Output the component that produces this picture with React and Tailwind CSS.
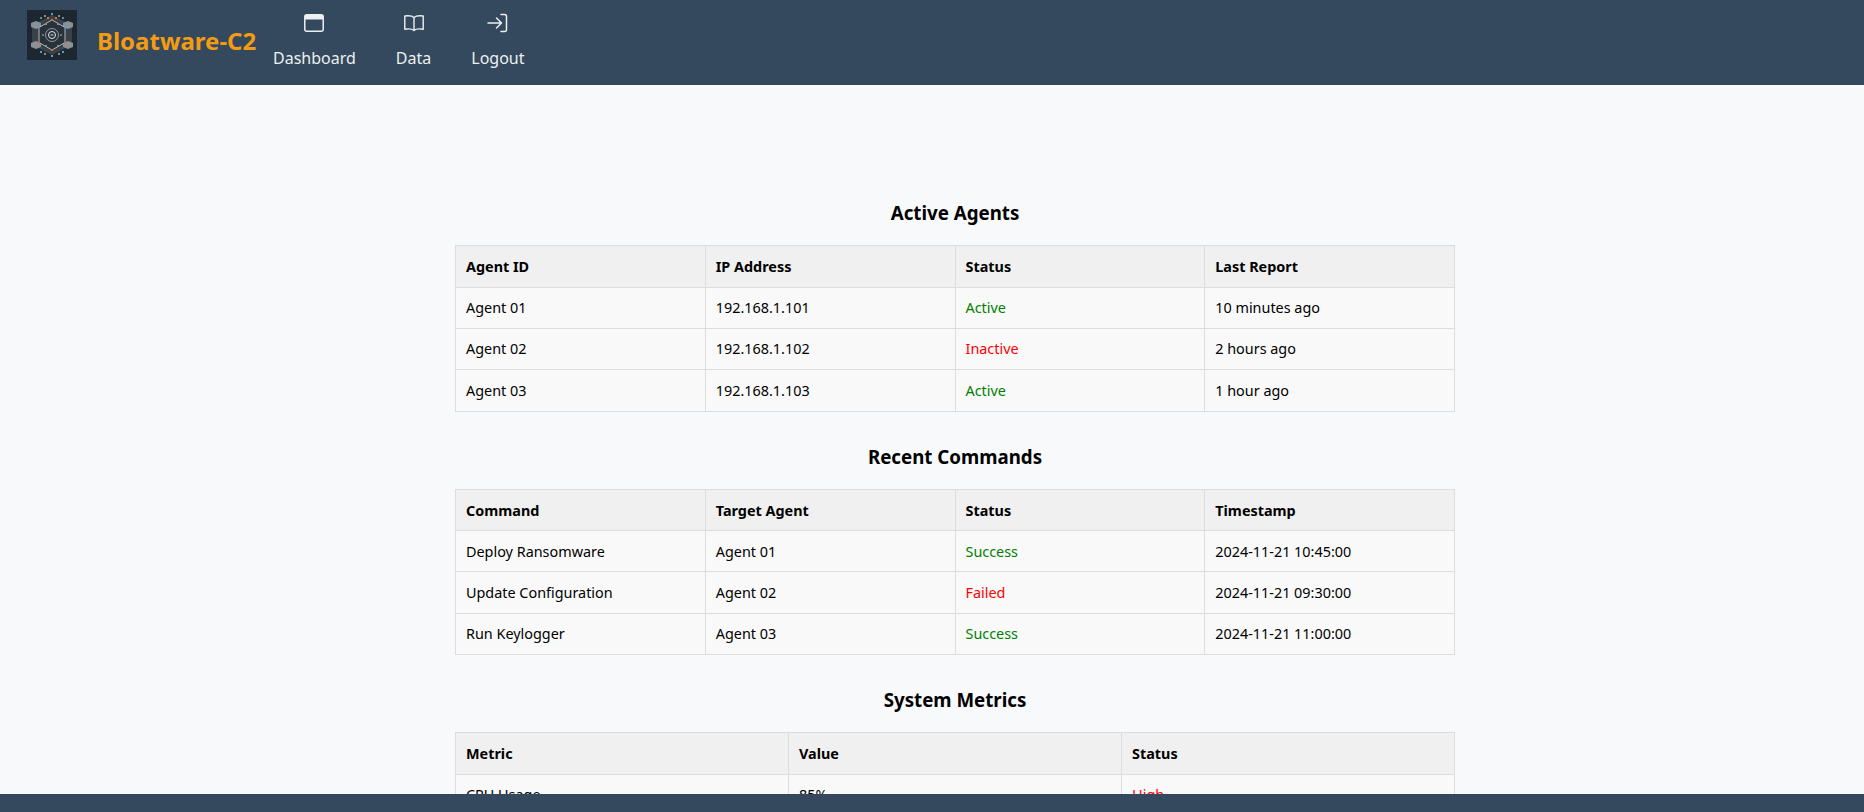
import React from "react";

const font = "font-['Noto_Sans',sans-serif]";

function Logo() {
  const hex = "25,10 38,17.5 38,32.5 25,40 12,32.5 12,17.5";
  const dots = [
    [25,4,"#4ea3c7"],[18,6,"#8a8f94"],[32,6,"#8a8f94"],[14,8,"#6b8796"],[36,8,"#6b8796"],
    [21,8,"#d0703a"],[29,8,"#d0703a"],[25,10,"#d0703a"],[12,17,"#4ea3c7"],[38,17,"#4ea3c7"],[12,33,"#d0703a"],[38,33,"#d0703a"],
    [25,40,"#d0703a"],[25,46,"#4ea3c7"],[18,44,"#8a8f94"],[32,44,"#8a8f94"],[14,42,"#4ea3c7"],[36,42,"#4ea3c7"],
    [19,14,"#8a8f94"],[31,14,"#8a8f94"],[19,36,"#8a8f94"],[31,36,"#8a8f94"],[16,25,"#6b7278"],[34,25,"#6b7278"],
  ];
  return (
    <svg width="50" height="50" viewBox="0 0 50 50" className="shrink-0">
      <rect width="50" height="50" fill="#1c2732" />
      <polygon points="25,5 45,15 45,35 25,45 5,35 5,15" fill="#3a4148" />
      {[[9,15],[41,15],[9,35],[41,35]].map(([x,y],i)=>(
        <polygon key={i} points={`${x},${y-4} ${x+5},${y-2} ${x+5},${y+2} ${x},${y+4} ${x-5},${y+2} ${x-5},${y-2}`} fill="#8b9297" />
      ))}
      <polygon points={hex} fill="#29323a" stroke="#c9d6dc" strokeWidth="0.8" />
      <circle cx="25" cy="25" r="6.5" fill="none" stroke="#8f9aa0" strokeWidth="1" />
      <circle cx="25" cy="25" r="3.5" fill="none" stroke="#e3e8ea" strokeWidth="1" />
      <rect x="23.5" y="24.5" width="3" height="1" fill="#e3e8ea" />
      {dots.map(([x,y,c],i)=>(<rect key={i} x={x-1} y={y-1} width="2" height="2" fill={c} />))}
    </svg>
  );
}

const WindowIcon = () => (
  <svg width="20" height="20" viewBox="0 0 20 20" fill="none">
    <rect x="0.8" y="1.8" width="18.4" height="16.4" rx="2" stroke="#ecf0f1" strokeWidth="1.5" />
    <path d="M0.8 6.5V3.8a2 2 0 0 1 2-2h14.4a2 2 0 0 1 2 2v2.7z" fill="#ecf0f1" />
  </svg>
);
const BookIcon = () => (
  <svg width="20" height="20" viewBox="0 0 20 20" fill="none" stroke="#ecf0f1" strokeWidth="1.4" strokeLinejoin="round">
    <path d="M10 4.5C8.5 3 4.5 2.6 0.8 3v13.2C4.5 15.7 8.5 16 10 17.4c1.5-1.4 5.5-1.7 9.2-1.2V3C15.5 2.6 11.5 3 10 4.5z" />
    <path d="M10 4.5v12.9" />
  </svg>
);
const LogoutIcon = () => (
  <svg width="21" height="20" viewBox="0 0 21 20" fill="none" stroke="#ecf0f1" strokeWidth="1.5" strokeLinecap="round" strokeLinejoin="round">
    <path d="M1 10h13M9.5 5l5 5-5 5" />
    <path d="M14 1.5h3.5A2 2 0 0 1 19.5 3.5v13a2 2 0 0 1-2 2H14" />
  </svg>
);

function NavItem({ icon: Icon, label }) {
  return (
    <a className="flex flex-col items-center text-[#ecf0f1] text-base leading-6">
      <span className="h-[30px] mb-[8px] flex items-center justify-center"><Icon /></span>
      <span>{label}</span>
    </a>
  );
}

function DataTable({ title, columns, rows, widthClass }) {
  return (
    <section className="w-[1000px] mx-auto">
      <h2 className="text-center text-[18.72px] font-bold leading-[26px] text-black mb-[19px]">{title}</h2>
      <table className="w-full border-collapse table-fixed text-[14.4px] text-black">
        <thead>
          <tr className="bg-[#f0f0f0]">
            {columns.map((c) => (
              <th key={c} className={`${widthClass} h-[41.4px] border border-[#dddddd] px-[10px] pt-[1px] text-left font-bold`}>{c}</th>
            ))}
          </tr>
        </thead>
        <tbody className="bg-[#f9f9f9]">
          {rows.map((r, i) => (
            <tr key={i}>
              {r.map((cell, j) => (
                <td key={j} className={`h-[41.3px] border border-[#dddddd] px-[10px] ${cell.ok === true ? "text-[#008000]" : cell.ok === false ? "text-[#ff0000]" : ""}`}>
                  {cell.t ?? cell}
                </td>
              ))}
            </tr>
          ))}
        </tbody>
      </table>
    </section>
  );
}

export default function App() {
  return (
    <div className={`h-[812px] w-full flex flex-col overflow-hidden bg-[#f8f9fa] ${font}`}>
      <header className="h-[85px] shrink-0 bg-[#34495e] flex items-start pl-[27px]">
        <div className="pt-[10px]"><Logo /></div>
        <div className="ml-[20px] mt-[24px] text-2xl font-bold leading-[33px] text-[#f39c12] w-[176px]">Bloatware-C2</div>
        <nav className="flex gap-[40px] pt-[8px]">
          <NavItem icon={WindowIcon} label="Dashboard" />
          <NavItem icon={BookIcon} label="Data" />
          <NavItem icon={LogoutIcon} label="Logout" />
        </nav>
      </header>
      <main className="flex-1 min-h-0 overflow-hidden pt-[115.25px] pl-[46px] flex flex-col gap-[32.25px]">
        <DataTable
          title="Active Agents"
          widthClass="w-1/4"
          columns={["Agent ID", "IP Address", "Status", "Last Report"]}
          rows={[
            ["Agent 01", "192.168.1.101", { t: "Active", ok: true }, "10 minutes ago"],
            ["Agent 02", "192.168.1.102", { t: "Inactive", ok: false }, "2 hours ago"],
            ["Agent 03", "192.168.1.103", { t: "Active", ok: true }, "1 hour ago"],
          ]}
        />
        <DataTable
          title="Recent Commands"
          widthClass="w-1/4"
          columns={["Command", "Target Agent", "Status", "Timestamp"]}
          rows={[
            ["Deploy Ransomware", "Agent 01", { t: "Success", ok: true }, "2024-11-21 10:45:00"],
            ["Update Configuration", "Agent 02", { t: "Failed", ok: false }, "2024-11-21 09:30:00"],
            ["Run Keylogger", "Agent 03", { t: "Success", ok: true }, "2024-11-21 11:00:00"],
          ]}
        />
        <DataTable
          title="System Metrics"
          widthClass="w-1/3"
          columns={["Metric", "Value", "Status"]}
          rows={[["CPU Usage", "85%", { t: "High", ok: false }]]}
        />
      </main>
      <footer className="h-[18px] shrink-0 bg-[#34495e]" />
    </div>
  );
}
